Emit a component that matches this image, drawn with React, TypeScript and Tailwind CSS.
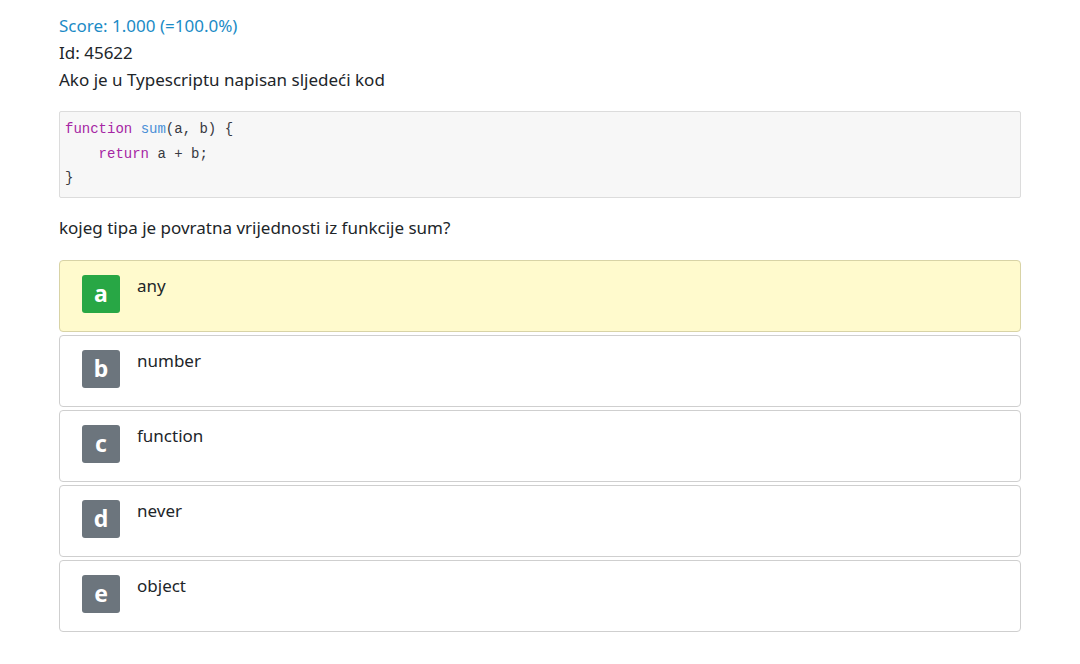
const options = [
  { key: 'a', text: 'any', correct: true },
  { key: 'b', text: 'number' },
  { key: 'c', text: 'function' },
  { key: 'd', text: 'never' },
  { key: 'e', text: 'object' },
];

const Option = ({ letter, text, correct }: { letter: string; text: string; correct?: boolean }) => {
  return (
    <div
      className={
        correct
          ? 'flex items-start h-[72px] pl-[22px] pt-[14px] rounded border border-[#d8d3a6] bg-[#fffacd]'
          : 'flex items-start h-[72px] pl-[22px] pt-[14px] rounded border border-[#cfcfcf] bg-white'
      }
    >
      <div
        className={
          correct
            ? 'w-[38px] h-[38px] rounded-[3px] bg-[#28a745] text-white flex items-center justify-center text-[23px] font-bold'
            : 'w-[38px] h-[38px] rounded-[3px] bg-[#6c757d] text-white flex items-center justify-center text-[23px] font-bold'
        }
      >
        {letter}
      </div>
      <div className="ml-[17px] -mt-[3px] text-[17px] leading-[27px] text-[#212529]">{text}</div>
    </div>
  );
};

const App = () => {
  return (
    <div className="min-h-screen bg-white px-[59px] pt-[12px] font-['Noto_Sans',sans-serif] text-[17px] leading-[27px] text-[#212529]">
      <div className="text-[#1b8bc6]">Score: 1.000 (=100.0%)</div>
      <div>Id: 45622</div>
      <div>Ako je u Typescriptu napisan sljedeći kod</div>
      <pre className="mt-[18px] mb-[16px] px-[5px] pt-[5px] pb-[6px] bg-[#f7f7f7] border border-[#dcdcdc] rounded-[2px] font-['Liberation_Mono',monospace] text-[14px] leading-[24.5px] text-[#383a42]">
        <span className="text-[#a626a4]">function</span> <span className="text-[#4a8fd6]">sum</span>(a, b) {'{'}
        {'\n'}    <span className="text-[#a626a4]">return</span> a + b;
        {'\n'}{'}'}
      </pre>
      <div>kojeg tipa je povratna vrijednosti iz funkcije sum?</div>
      <div className="mt-[19px] flex flex-col gap-[3px] w-[962px]">
        {options.map((o) => (
          <Option key={o.key} letter={o.key} text={o.text} correct={o.correct} />
        ))}
      </div>
    </div>
  );
};

export default App;
